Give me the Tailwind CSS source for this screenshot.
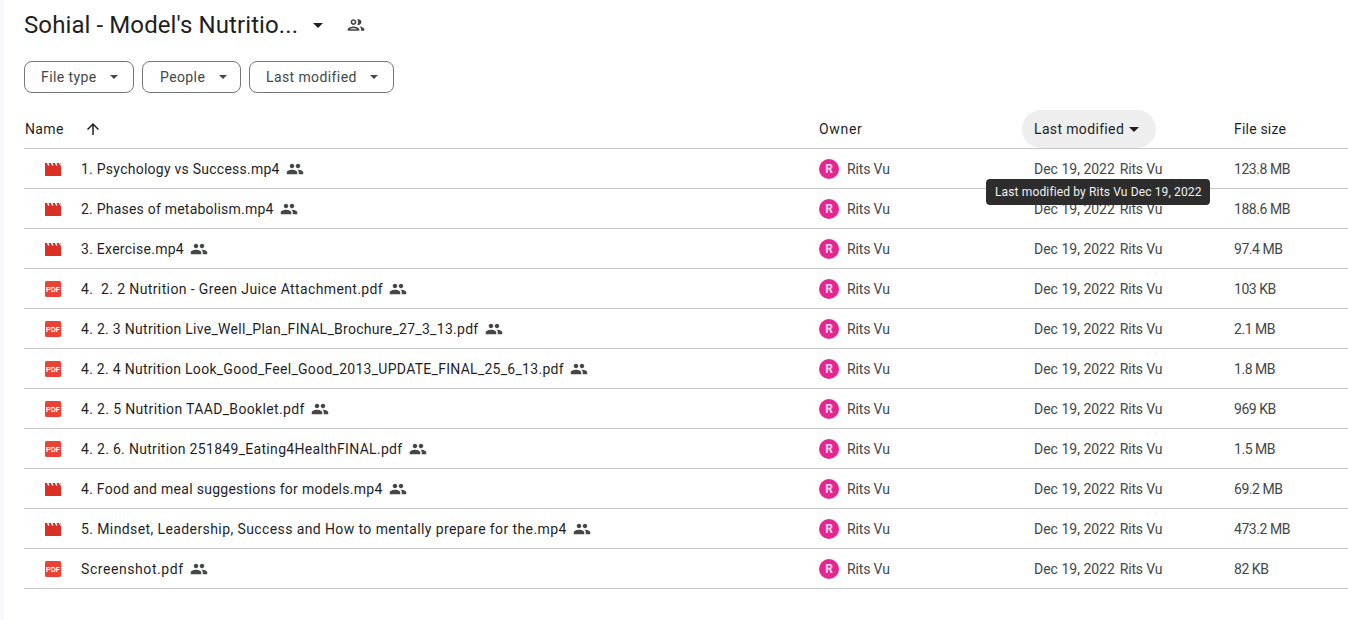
<!DOCTYPE html>
<html lang="en">
  <head>
    <meta charset="UTF-8" />
    <title>Sohial - Model's Nutrition</title>
    <script src="https://cdn.jsdelivr.net/npm/@tailwindcss/browser@4"></script>
  </head>
  <body class="bg-[#f8fafd] font-['Roboto',sans-serif] text-[#1f1f1f] overflow-hidden">
    <div class="relative ml-[4px] h-[620px] bg-white pl-[20px]">
      <div class="flex h-[50px] items-center">
        <h1 class="w-[278px] text-[24px] leading-[28px] tracking-[0.1px] whitespace-nowrap">Sohial - Model's Nutritio...</h1>
        <svg class="ml-[11px]" width="10" height="5" viewBox="0 0 10 5"><path d="M0 0h10L5 5z" fill="#1f1f1f"/></svg>
        <svg class="ml-[23px]" width="20" height="20" viewBox="0 0 24 24" fill="#444746"><path d="M9 13.75c-2.34 0-7 1.17-7 3.5V19h14v-1.75c0-2.33-4.66-3.5-7-3.5zM4.34 17c.84-.58 2.87-1.25 4.66-1.25s3.82.67 4.66 1.25H4.34zM9 12c1.93 0 3.5-1.57 3.5-3.5S10.93 5 9 5 5.5 6.57 5.5 8.5 7.07 12 9 12zm0-5c.83 0 1.5.67 1.5 1.5S9.83 10 9 10s-1.5-.67-1.5-1.5S8.17 7 9 7zm7.04 6.81c1.16.84 1.96 1.96 1.96 3.44V19h4v-1.75c0-2.02-3.5-3.17-5.96-3.44zM15 12c1.93 0 3.5-1.57 3.5-3.5S16.93 5 15 5c-.54 0-1.04.13-1.5.35.63.89 1 1.98 1 3.15s-.37 2.26-1 3.15c.46.22.96.35 1.5.35z"/></svg>
      </div>
      <div class="mt-[11px] flex gap-[8px] text-[14px] tracking-[0.4px] text-[#444746]">
        <button class="flex h-[32px] w-[110px] items-center rounded-[8px] border border-[#747775] pl-[16px]">File type<svg class="ml-[13px]" width="8" height="4" viewBox="0 0 10 5"><path d="M0 0h10L5 5z" fill="#444746"/></svg></button>
        <button class="flex h-[32px] w-[99px] items-center rounded-[8px] border border-[#747775] pl-[17px]">People<svg class="ml-[14px]" width="8" height="4" viewBox="0 0 10 5"><path d="M0 0h10L5 5z" fill="#444746"/></svg></button>
        <button class="flex h-[32px] w-[145px] items-center rounded-[8px] border border-[#747775] pl-[16px]">Last modified<svg class="ml-[13px]" width="8" height="4" viewBox="0 0 10 5"><path d="M0 0h10L5 5z" fill="#444746"/></svg></button>
      </div>
      <div class="mt-[17px] flex h-[39px] items-center border-b border-[#c7c7c7] text-[14px] tracking-[0.35px]">
        <div class="flex w-[795px] items-center pl-[1px]">
          <span>Name</span>
          <svg class="ml-[20px]" width="18" height="18" viewBox="0 0 24 24" fill="#1f1f1f"><path d="M4 12l1.41 1.41L11 7.83V20h2V7.83l5.58 5.59L20 12l-8-8-8 8z"/></svg>
        </div>
        <div class="w-[203px] tracking-[0.7px]">Owner</div>
        <div class="flex h-[38px] w-[134px] items-center rounded-full bg-[#eeeeee] pl-[12px]">Last modified<svg class="ml-[5px]" width="10" height="5" viewBox="0 0 10 5"><path d="M0 0h10L5 5z" fill="#1f1f1f"/></svg></div>
        <div class="ml-[78px] tracking-[0.2px]">File size</div>
      </div>
      <div id="rows"></div>
      <div class="absolute left-[982px] top-[179px] flex h-[26px] w-[224px] items-center rounded-[4px] bg-[#2d2d2d] pl-[9px] text-[12px] tracking-[0.14px] whitespace-nowrap text-[#f2f2f2]">Last modified by Rits Vu Dec 19, 2022</div>
    </div>
    <script>
      // last value is the letter spacing class that brings each name to the reference width
      const files = [
        ["video", "1. Psychology vs Success.mp4", "123.8 MB", "tracking-[0.25px]"],
        ["video", "2. Phases of metabolism.mp4", "188.6 MB", "tracking-[0.22px]"],
        ["video", "3. Exercise.mp4", "97.4 MB", "tracking-[0.27px]"],
        ["pdf", "4.&nbsp; 2. 2 Nutrition - Green Juice Attachment.pdf", "103 KB", "tracking-[0.38px]"],
        ["pdf", "4. 2. 3 Nutrition Live_Well_Plan_FINAL_Brochure_27_3_13.pdf", "2.1 MB", "tracking-[0.29px]"],
        ["pdf", "4. 2. 4 Nutrition Look_Good_Feel_Good_2013_UPDATE_FINAL_25_6_13.pdf", "1.8 MB", "tracking-[0.28px]"],
        ["pdf", "4. 2. 5 Nutrition TAAD_Booklet.pdf", "969 KB", "tracking-[0.35px]"],
        ["pdf", "4. 2. 6. Nutrition 251849_Eating4HealthFINAL.pdf", "1.5 MB", "tracking-[0.31px]"],
        ["video", "4. Food and meal suggestions for models.mp4", "69.2 MB", "tracking-[0.28px]"],
        ["video", "5. Mindset, Leadership, Success and How to mentally prepare for the.mp4", "473.2 MB", "tracking-[0.4px]"],
        ["pdf", "Screenshot.pdf", "82 KB", "tracking-[0.57px]"],
      ];
      const icons = {
        video: `<svg width="16" height="16" viewBox="0 0 16 16"><path fill="#d93025" d="M0 2h16v13H0z"/><path fill="#fff" d="M2 2h1.5l1 2.5H3zM6 2h1.5l1 2.5H7zM10 2h1.5l1 2.5H11zM14 2h1.2l.8 2.5h-1z"/></svg>`,
        pdf: `<svg width="16" height="16" viewBox="0 0 16 16"><rect width="16" height="16" rx="1.5" fill="#ea4335"/><text x="8" y="10.6" text-anchor="middle" font-family="Liberation Sans" font-weight="700" font-size="7" fill="#fff">PDF</text></svg>`,
      };
      const shared = `<svg class="ml-[6px] shrink-0" width="18" height="18" viewBox="0 0 24 24" fill="#444746"><path d="M16 11c1.66 0 2.99-1.34 2.99-3S17.66 5 16 5s-3 1.34-3 3 1.34 3 3 3zm-8 0c1.66 0 2.99-1.34 2.99-3S9.66 5 8 5 5 6.34 5 8s1.34 3 3 3zm0 2c-2.33 0-7 1.17-7 3.5V19h14v-2.5c0-2.33-4.67-3.5-7-3.5zm8 0c-.29 0-.62.02-.97.05 1.16.84 1.97 1.97 1.97 3.45V19h6v-2.5c0-2.33-4.67-3.5-7-3.5z"/></svg>`;
      document.getElementById("rows").innerHTML = files.map(([type, name, size, spacing]) => `
        <div class="flex h-[40px] items-center border-b border-[#c7c7c7] pt-[1px] text-[14px] text-[#444746]">
          <div class="flex w-[795px] items-center pl-[21px]">
            ${icons[type]}
            <span class="ml-[20px] whitespace-nowrap text-[#1f1f1f] ${spacing}">${name}</span>
            ${shared}
          </div>
          <div class="flex w-[215px] items-center">
            <span class="flex h-[20px] w-[20px] items-center justify-center rounded-full bg-[#e52592] text-[12px] font-bold text-[#fbd5e8]">R</span>
            <span class="ml-[8px] tracking-[-0.15px]">Rits Vu</span>
          </div>
          <div class="flex w-[200px] whitespace-nowrap"><span>Dec 19, 2022</span><span class="ml-[5px] tracking-[-0.2px]">Rits Vu</span></div>
          <div class="tracking-[-0.45px]">${size}</div>
        </div>`).join("");
    </script>
  </body>
</html>
